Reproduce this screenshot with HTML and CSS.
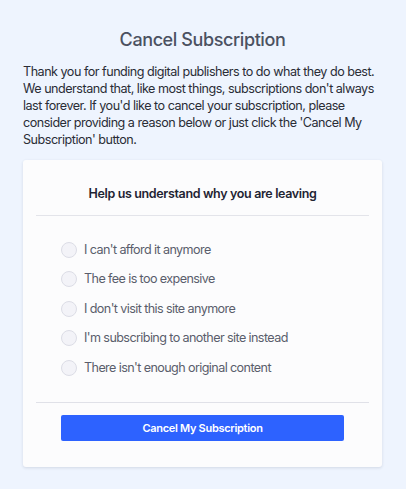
FILE: index.html
```html
<!DOCTYPE html>
<html lang="en">
<head>
<meta charset="utf-8">
<title>Cancel Subscription</title>
<link rel="stylesheet" href="styles.css">
</head>
<body>
<main class="page">
  <h1 class="title">Cancel Subscription</h1>
  <p class="intro">Thank you for funding digital publishers to do what they do best. We understand that, like most things, subscriptions don't always last forever. If you'd like to cancel your subscription, please consider providing a reason below or just click the 'Cancel My Subscription' button.</p>
  <section class="card">
    <h2 class="card-title">Help us understand why you are leaving</h2>
    <div class="reasons">
      <label class="reason"><input type="radio" name="reason"><span>I can't afford it anymore</span></label>
      <label class="reason"><input type="radio" name="reason"><span>The fee is too expensive</span></label>
      <label class="reason"><input type="radio" name="reason"><span>I don't visit this site anymore</span></label>
      <label class="reason"><input type="radio" name="reason"><span>I'm subscribing to another site instead</span></label>
      <label class="reason"><input type="radio" name="reason"><span>There isn't enough original content</span></label>
    </div>
    <div class="actions">
      <button class="cancel-btn" type="button">Cancel My Subscription</button>
    </div>
  </section>
</main>
</body>
</html>
```

FILE: styles.css
```css
* { box-sizing: border-box; }
html, body { margin: 0; padding: 0; }
body {
  background: #eef4fe;
  font-family: Inter, "Noto Sans", sans-serif;
  width: 406px;
  height: 489px;
  overflow: hidden;
}
.page {
  padding: 28px 24px 0 23px;
}
.title {
  margin: 0;
  text-align: center;
  font-size: 18px;
  font-weight: 500;
  line-height: 24px;
  letter-spacing: -0.4px;
  color: #4b5161;
}
.intro {
  margin: 11px 0 0;
  font-size: 12.6px;
  line-height: 17px;
  letter-spacing: -0.5px;
  color: #2a2d36;
}
.card {
  margin-top: 12px;
  background: #fcfcfd;
  border-radius: 3px;
  box-shadow: 0 1px 3px rgba(40, 50, 80, 0.14);
  padding: 0 13px 26px;
}
.card-title {
  margin: 0;
  padding: 25px 0 13px;
  text-align: center;
  font-size: 12.5px;
  font-weight: 600;
  line-height: 17px;
  letter-spacing: -0.35px;
  color: #1f2433;
  border-bottom: 1px solid #e3e4ea;
}
.reasons {
  display: flex;
  flex-direction: column;
  gap: 13.5px;
  padding: 25.5px 0 26.5px 25px;
  border-bottom: 1px solid #e0e1e8;
}
.reason {
  display: flex;
  align-items: center;
  gap: 7px;
  font-size: 12.6px;
  line-height: 16px;
  letter-spacing: -0.6px;
  color: #5a5e6c;
}
.reason input {
  appearance: none;
  -webkit-appearance: none;
  margin: 0;
  width: 16px;
  height: 16px;
  border-radius: 50%;
  background: #f3f3f8;
  border: 1px solid #dcdde6;
  flex: none;
}
.actions {
  padding: 12px 25px 0;
}
.cancel-btn {
  display: block;
  width: 100%;
  height: 26px;
  border: none;
  border-radius: 2px;
  background: #2d62ff;
  color: #ffffff;
  font-family: Inter, "Noto Sans", sans-serif;
  font-size: 11px;
  font-weight: 600;
  letter-spacing: -0.3px;
}
```
